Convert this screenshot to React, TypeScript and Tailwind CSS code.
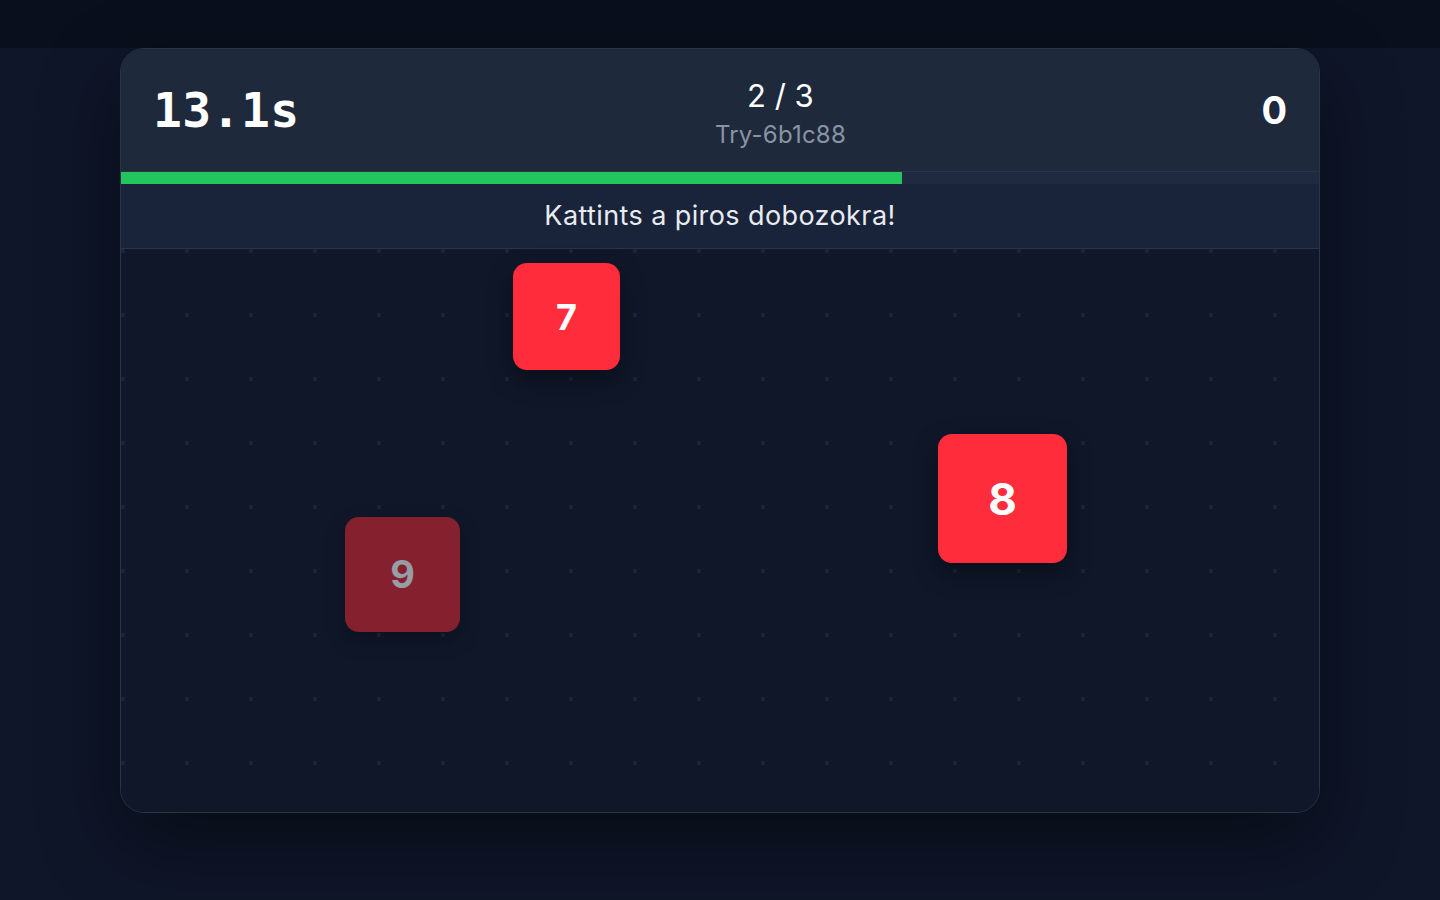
import React from 'react';

interface Target {
  id: number;
  label: string;
  left: number;
  top: number;
  size: number;
  text: string;
  hit: boolean;
}

const targets: Target[] = [
  { id: 1, label: '7', left: 392, top: 14, size: 107, text: 'text-[36px]', hit: false },
  { id: 2, label: '8', left: 817, top: 185, size: 129, text: 'text-[44px]', hit: false },
  { id: 3, label: '9', left: 224, top: 268, size: 115, text: 'text-[38px]', hit: true },
];

const progress = 65.2;

export default function App() {
  return (
    <div className="min-h-screen w-full bg-[#0f1629] font-['Inter','Noto_Sans',sans-serif]">
      <div className="h-12 w-full bg-[#0a0f1d]" />
      <div className="flex justify-center">
        <div className="w-[1200px] overflow-hidden rounded-[24px] border border-[#2a3446] bg-[#0f1729] shadow-[0_30px_80px_rgba(0,0,0,0.45)]">
          <div className="flex h-[122px] items-center justify-between bg-[#1e293b] px-8">
            <div className="font-['DejaVu_Sans_Mono','Liberation_Mono',monospace] text-[48px] font-bold leading-none tracking-[0.4px] text-white">
              13.1s
            </div>
            <div className="flex flex-col items-center pt-2">
              <div className="text-[31px] leading-[36px] text-white">2 / 3</div>
              <div className="mt-[5px] text-[24px] leading-[32px] tracking-[0.2px] text-[#8a93a3]">Try-6b1c88</div>
            </div>
            <div className="text-[38px] font-bold leading-none text-white">0</div>
          </div>
          <div className="h-[13px] border-t border-[#2a3446] bg-[#1f2a40]">
            <div className="h-full bg-[#22c55e]" style={{ width: `${progress}%` }} />
          </div>
          <div className="flex h-[65px] items-center justify-center border-b border-[#2a3446] bg-[#19233a] text-[27px] tracking-[0.4px] text-[#e8ebf0]">
            Kattints a piros dobozokra!
          </div>
          <div className="relative h-[563px] bg-[#0f1729] bg-[radial-gradient(circle_at_2px_2px,#1b2538_2px,transparent_2.5px)] bg-[length:64px_64px]">
            {targets.map((t) => (
              <div
                key={t.id}
                className={`absolute flex items-center justify-center rounded-[14px] font-bold ${t.text} ${
                  t.hit
                    ? 'bg-[#85212f] text-[#979ca5] shadow-[0_8px_20px_rgba(0,0,0,0.25)]'
                    : 'bg-[#ff2d3b] text-white shadow-[0_10px_24px_rgba(0,0,0,0.4)]'
                }`}
                style={{ left: t.left, top: t.top, width: t.size, height: t.size }}
              >
                {t.label}
              </div>
            ))}
          </div>
        </div>
      </div>
    </div>
  );
}
